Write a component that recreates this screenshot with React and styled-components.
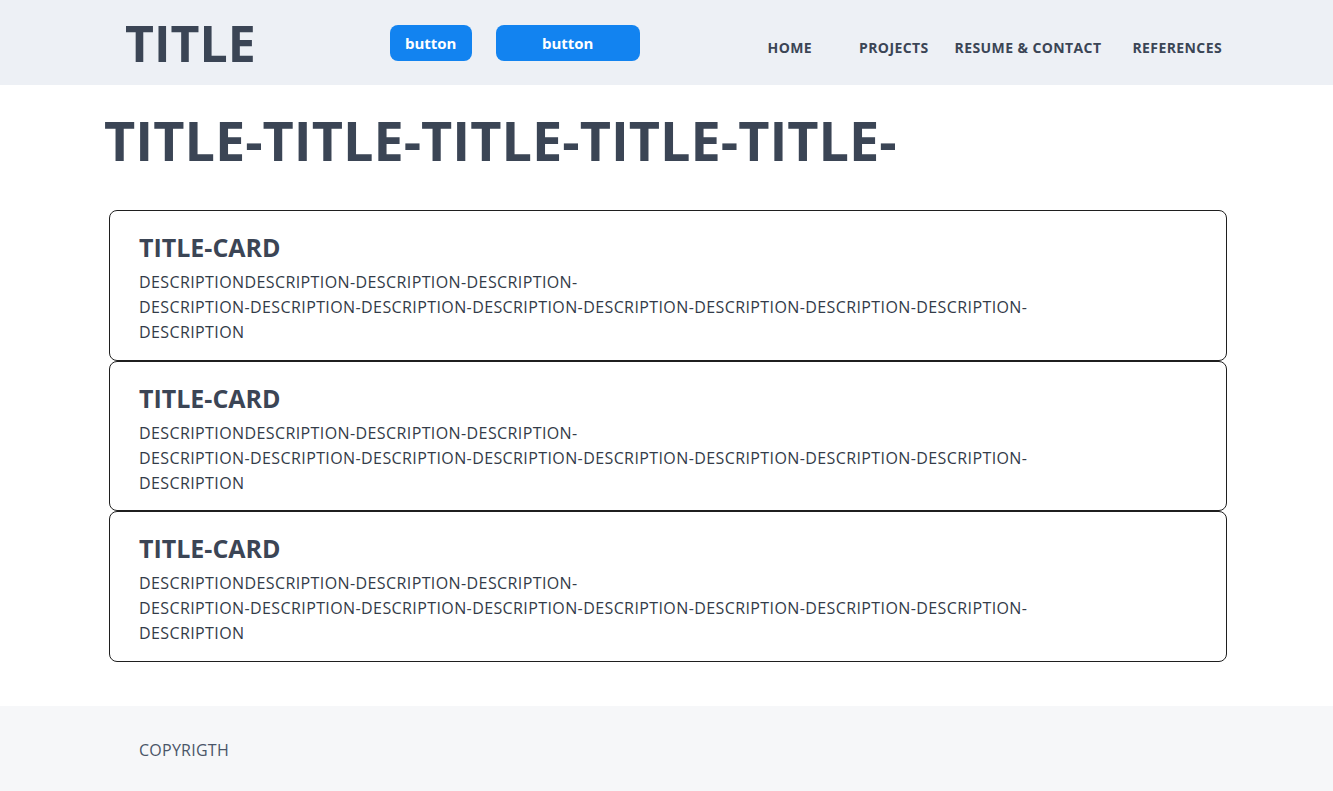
import React from "react";
import styled, { createGlobalStyle } from "styled-components";

const GlobalStyle = createGlobalStyle`
  body {
    margin: 0;
    font-family: "Open Sans", "Noto Sans", sans-serif;
    background: #ffffff;
    color: #3b4555;
  }
`;

const Header = styled.header`
  display: flex;
  align-items: center;
  height: 85px;
  background-color: #edf0f5;
  padding: 0 111px 0 125px;
`;

const Logo = styled.h1`
  margin: 0;
  font-size: 50px;
  font-weight: 700;
  color: #3b4555;
  line-height: 1;
`;

const ButtonGroup = styled.div`
  display: flex;
  gap: 24px;
  margin-left: 134px;
  align-self: flex-start;
  margin-top: 25px;
`;

const Button = styled.button`
  width: ${(p) => p.width}px;
  height: 36px;
  border: none;
  border-radius: 8px;
  background-color: #1283f0;
  color: #fff;
  font-family: "Open Sans", sans-serif;
  font-weight: 700;
  font-size: 15px;
  cursor: pointer;
`;

const Nav = styled.nav`
  display: flex;
  margin-left: auto;
  padding-top: 10px;
`;

const NavLink = styled.a`
  margin-left: ${(p) => p.gap}px;
  font-size: 14px;
  font-weight: 700;
  letter-spacing: 0.4px;
  color: #3b4555;
  text-decoration: none;
`;

const Main = styled.main`
  padding: 0 106px 44px 104px;
`;

const PageTitle = styled.h2`
  margin: 0;
  padding: 23px 0 37px;
  font-size: 54px;
  font-weight: 700;
  line-height: 65px;
  color: #3b4555;
`;

const CardList = styled.div`
  display: flex;
  flex-direction: column;
  margin-left: 5px;
`;

const Card = styled.article`
  border: 1px solid #1f1f1f;
  border-radius: 8px;
  padding: 21px 29px 17px;
  height: 150.5px;
  box-sizing: border-box;
`;

const CardTitle = styled.h3`
  margin: 0 0 8px;
  font-size: 25px;
  font-weight: 700;
  line-height: 30px;
  color: #3b4555;
`;

const CardText = styled.p`
  margin: 0;
  font-size: 16px;
  line-height: 25px;
  letter-spacing: 0.4px;
  color: #333b48;
`;

const Footer = styled.footer`
  display: flex;
  align-items: center;
  box-sizing: border-box;
  height: 85px;
  padding: 3px 0 0 139px;
  background-color: #f6f7f9;
  font-size: 16px;
  letter-spacing: 0.25px;
  color: #4a5568;
`;

const navItems = [
  { label: "HOME", gap: 0 },
  { label: "PROJECTS", gap: 47 },
  { label: "RESUME & CONTACT", gap: 26 },
  { label: "REFERENCES", gap: 31 },
];

export default function App() {
  return (
    <>
      <GlobalStyle />
      <Header>
        <Logo>TITLE</Logo>
        <ButtonGroup>
          <Button width={82}>button</Button>
          <Button width={144}>button</Button>
        </ButtonGroup>
        <Nav>
          {navItems.map((item) => (
            <NavLink key={item.label} href="#" gap={item.gap}>
              {item.label}
            </NavLink>
          ))}
        </Nav>
      </Header>
      <Main>
        <PageTitle>TITLE-TITLE-TITLE-TITLE-TITLE-</PageTitle>
        <CardList>
          {[1, 2, 3].map((n) => (
            <Card key={n}>
              <CardTitle>TITLE-CARD</CardTitle>
              <CardText>
                DESCRIPTIONDESCRIPTION-DESCRIPTION-DESCRIPTION-
                <br />
                DESCRIPTION-DESCRIPTION-DESCRIPTION-DESCRIPTION-DESCRIPTION-DESCRIPTION-DESCRIPTION-DESCRIPTION-
                <br />
                DESCRIPTION
              </CardText>
            </Card>
          ))}
        </CardList>
      </Main>
      <Footer>COPYRIGTH</Footer>
    </>
  );
}
